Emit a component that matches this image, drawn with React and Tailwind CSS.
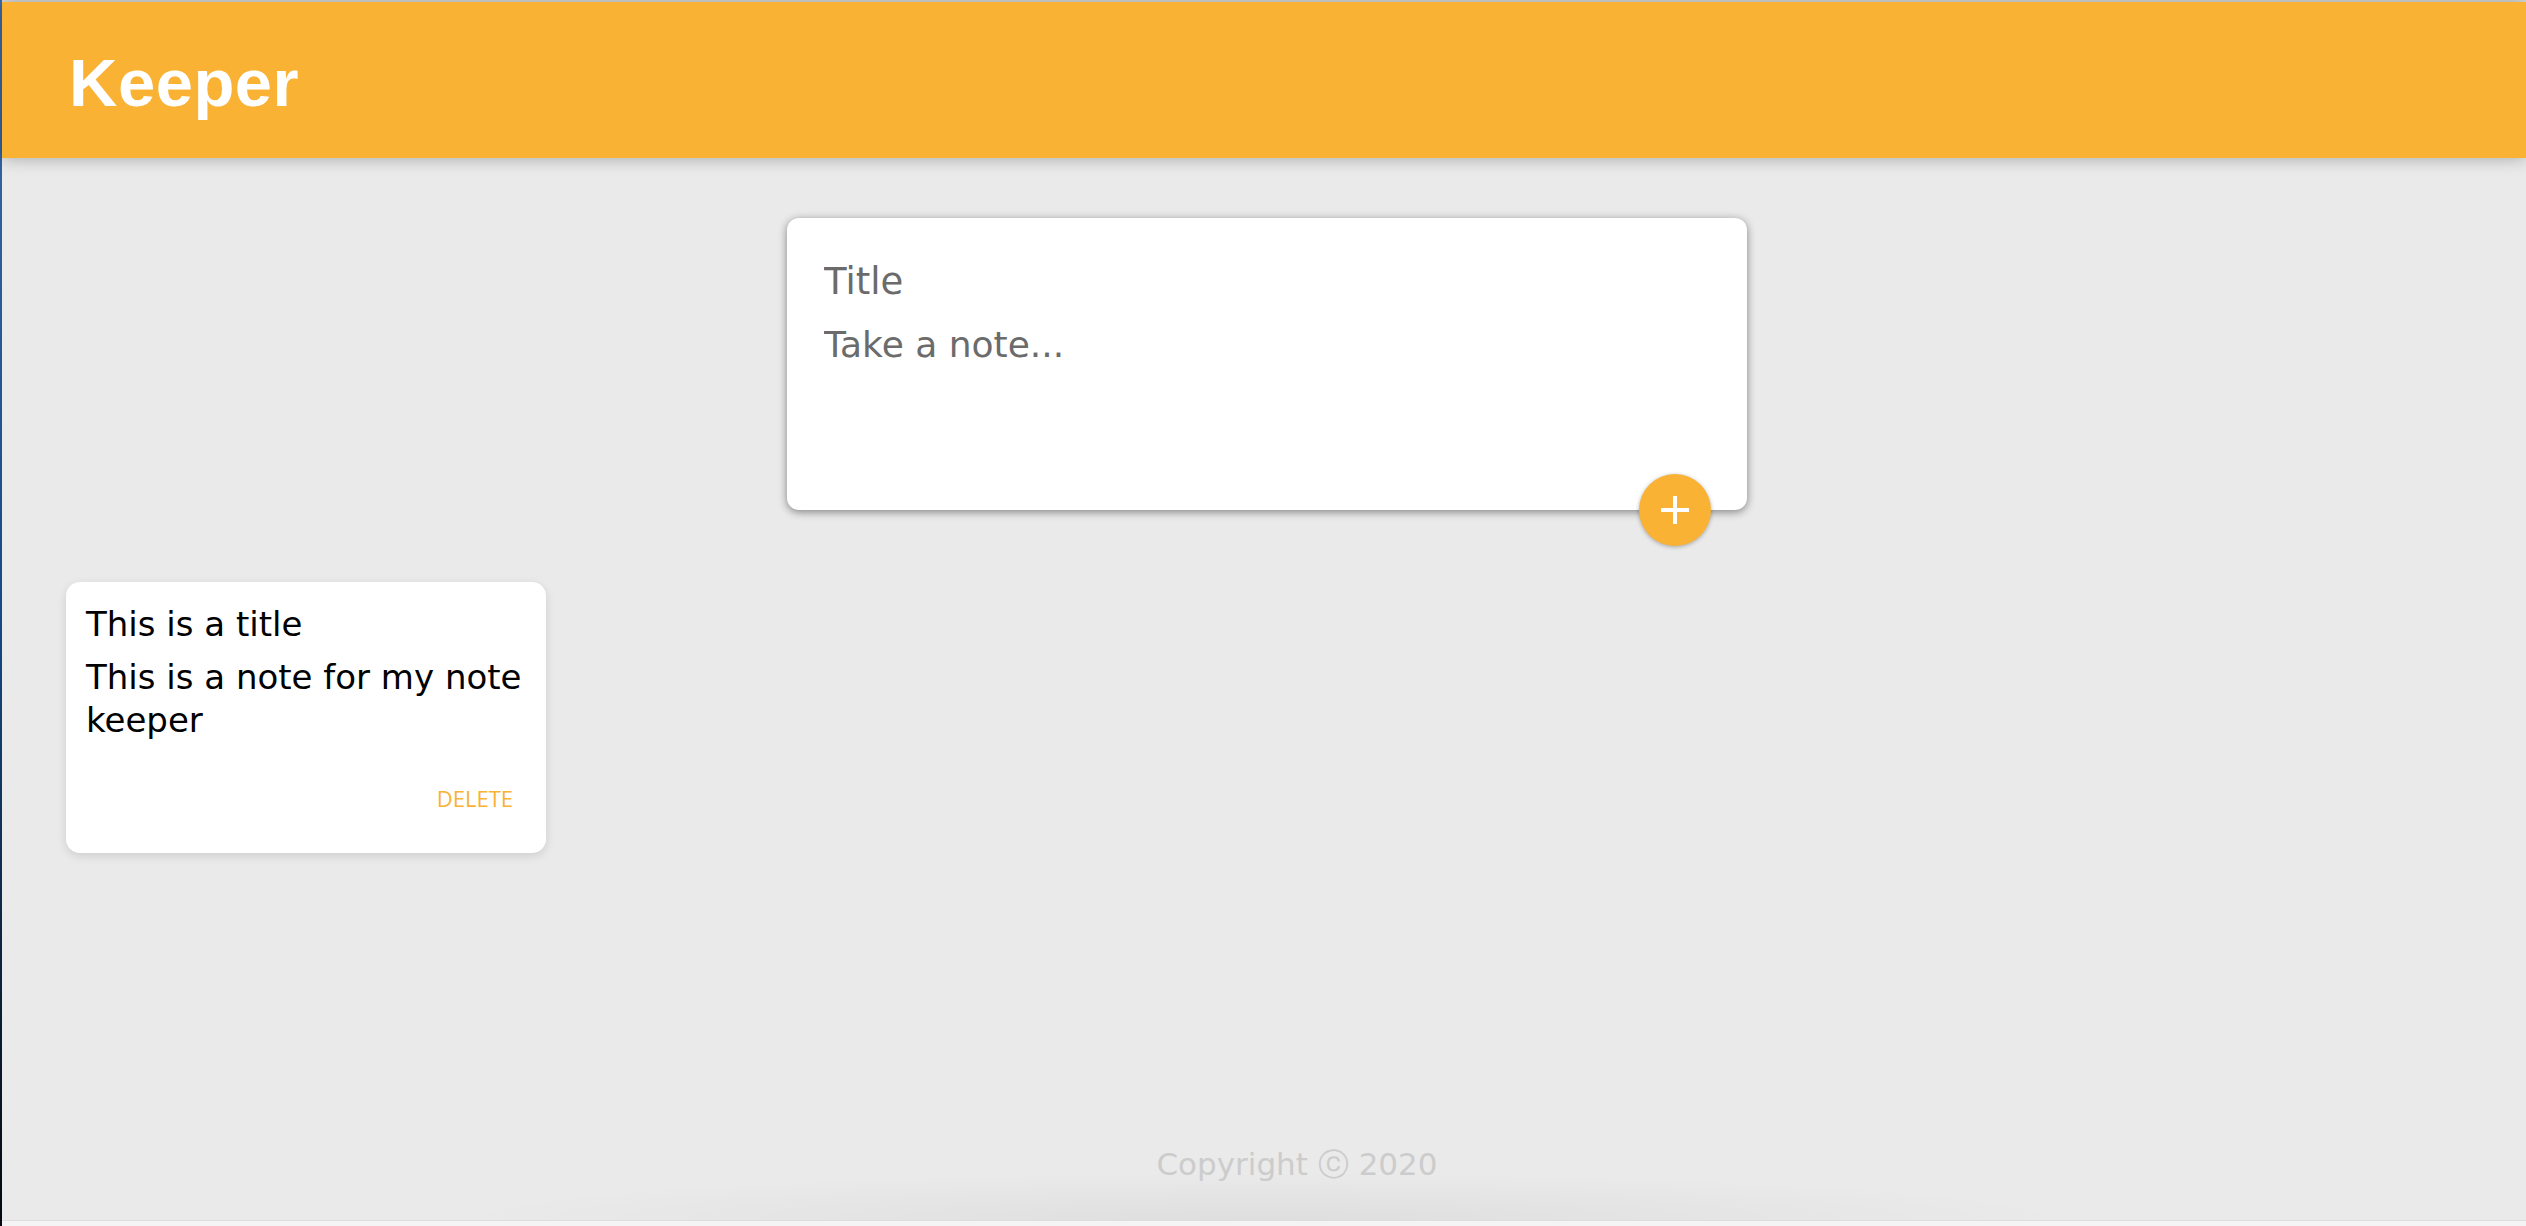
import React, { useState } from 'react';

const noteFont = "font-['DejaVu_Sans',sans-serif]";

function CreateArea({ onAdd }) {
	const [note, setNote] = useState({ title: '', content: '' });

	const submit = (e) => {
		e.preventDefault();
		onAdd(note);
		setNote({ title: '', content: '' });
	};

	return (
		<div className="flex justify-center pl-[6px] pt-[60px]">
			<form
				onSubmit={submit}
				className={`relative h-[292px] w-[960px] rounded-[12px] bg-white px-[37px] pt-[37px] shadow-[0_2px_8px_rgba(0,0,0,0.45)] ${noteFont}`}
			>
				<input
					name="title"
					value={note.title}
					onChange={(e) => setNote({ ...note, title: e.target.value })}
					placeholder="Title"
					className="block h-[54px] w-full bg-transparent text-[37px] text-[#333] outline-none placeholder:text-[#6b6b6b]"
				/>
				<textarea
					name="content"
					rows={3}
					value={note.content}
					onChange={(e) => setNote({ ...note, content: e.target.value })}
					placeholder="Take a note..."
					className="mt-[9px] block w-full resize-none bg-transparent text-[36px] leading-[54px] text-[#333] outline-none placeholder:text-[#6b6b6b]"
				/>
				<button
					type="submit"
					className="absolute bottom-[-36px] right-[36px] flex h-[72px] w-[72px] items-center justify-center rounded-full bg-[#f9b233] shadow-[0_1px_4px_rgba(0,0,0,0.3)]"
				>
					<svg width="28" height="28" viewBox="0 0 28 28" fill="none" stroke="white" strokeWidth="4">
						<path d="M14 0v28M0 14h28" />
					</svg>
				</button>
			</form>
		</div>
	);
}

function Note({ title, content, onDelete }) {
	return (
		<div className={`w-[480px] rounded-[14px] bg-white px-[20px] pb-[40px] pt-[21px] text-black shadow-[0_3px_10px_rgba(0,0,0,0.12)] ${noteFont}`}>
			<h2 className="text-[34px] font-normal leading-[43px]">{title}</h2>
			<p className="mt-[10px] text-[34px] leading-[43px]">{content}</p>
			<div className="mt-[41px] flex justify-end pr-[13px]">
				<button
					onClick={onDelete}
					className="font-['Open_Sans',sans-serif] text-[22px] uppercase leading-[30px] text-[#f9b233]"
				>
					Delete
				</button>
			</div>
		</div>
	);
}

export default function App() {
	const [notes, setNotes] = useState([
		{ title: 'This is a title', content: 'This is a note for my note keeper' },
	]);

	const addNote = (n) => {
		if (!n.title && !n.content) return;
		setNotes((prev) => [...prev, n]);
	};
	const deleteNote = (i) => setNotes((prev) => prev.filter((_, idx) => idx !== i));

	return (
		<div className="flex h-[1226px] w-full overflow-hidden bg-[#eaeaea]">
			{/* desktop edge peeking through on the left */}
			<div className="w-[2px] shrink-0 bg-gradient-to-b from-[#3d6ca8] via-[#154a85] to-[#05090f]" />
			<div className="flex min-w-0 flex-1 flex-col">
				<div className="h-[2px] bg-[#dcdcdc]" />
				<header className="relative z-10 flex h-[156px] items-center bg-[#f9b233] px-[67px] pt-[4px] shadow-[0_0_16px_rgba(0,0,0,0.3)]">
					<h1 className="font-['Liberation_Sans',sans-serif] text-[67px] font-bold leading-[67px] tracking-[0.5px] text-white">Keeper</h1>
				</header>

				<main className="flex-1">
					<CreateArea onAdd={addNote} />
					<div className="ml-[64px] mt-[72px] flex flex-wrap gap-[32px]">
						{notes.map((n, i) => (
							<Note key={i} title={n.title} content={n.content} onDelete={() => deleteNote(i)} />
						))}
					</div>
				</main>

				<footer className="bg-[radial-gradient(ellipse_820px_48px_at_50%_100%,rgba(0,0,0,0.05),transparent)] pb-[36px] pl-[66px] text-center">
					<p className={`text-[31px] leading-[40px] text-[#cccccc] ${noteFont}`}>Copyright ⓒ 2020</p>
				</footer>
				<div className="h-[6px] border-t border-[#dedede] bg-[#f4f4f4]" />
			</div>
		</div>
	);
}
